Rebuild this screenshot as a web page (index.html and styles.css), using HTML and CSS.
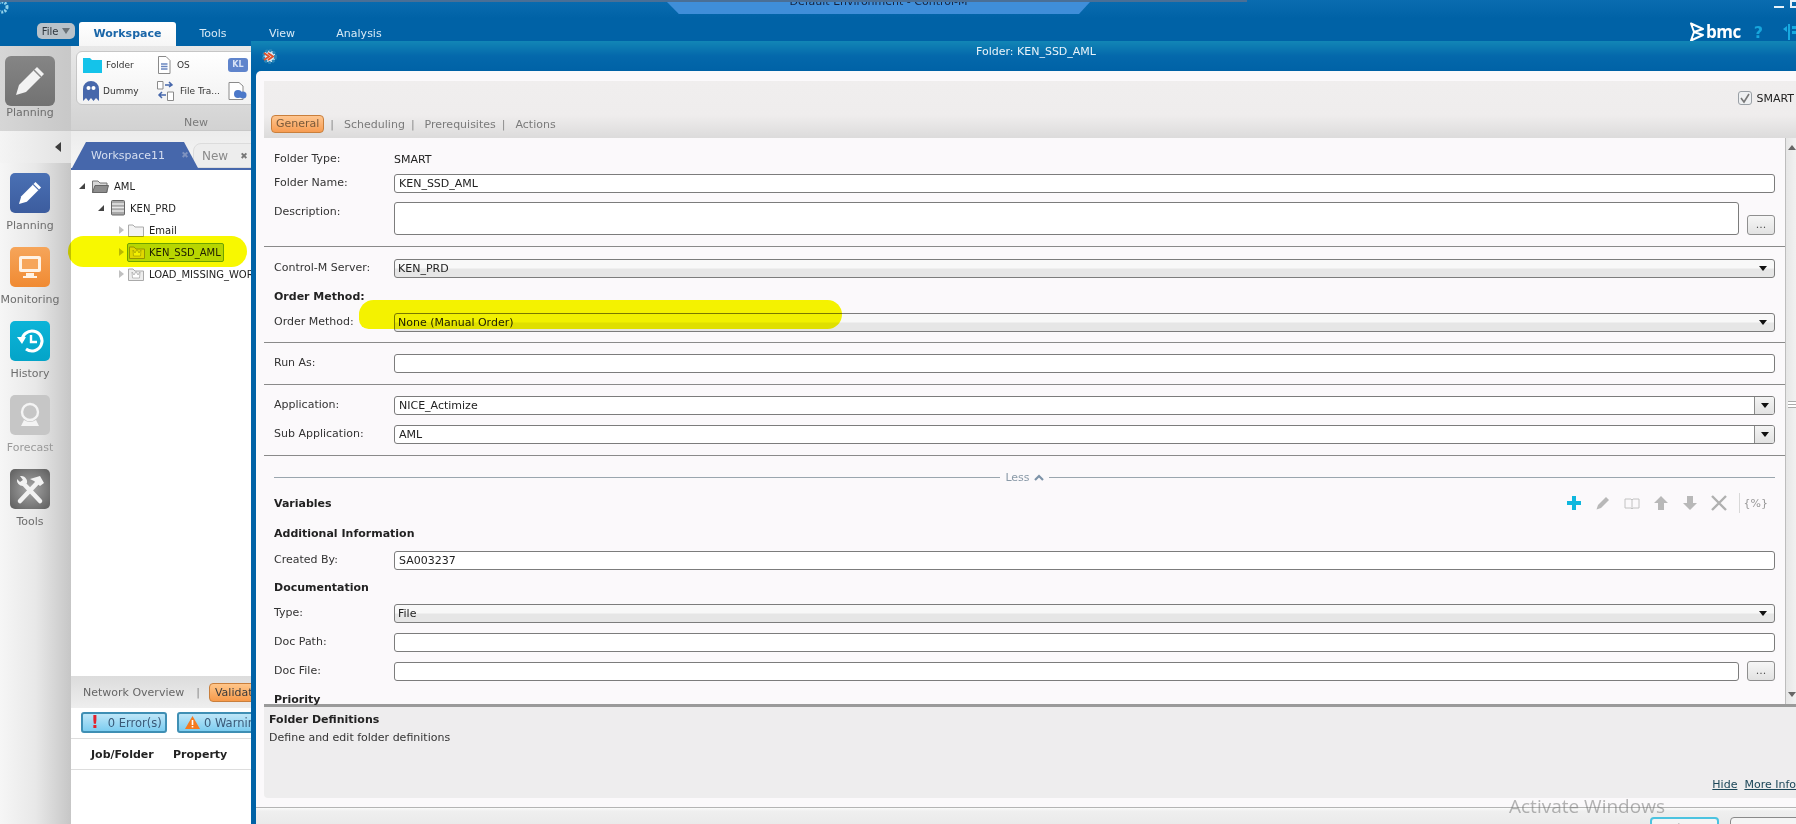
FILE: index.html
```html
<!DOCTYPE html>
<html lang="en">
<head>
<meta charset="utf-8">
<title>Default Environment - Control-M</title>
<link rel="stylesheet" href="styles.css">
</head>
<body>
<div class="app">
  <header class="topbar">
    <div class="title-tab"><span class="title-text">Default Environment - Control-M</span></div>
    <svg class="app-gear" width="16" height="16" viewBox="0 0 16 16"><circle cx="3" cy="8" r="5" fill="none" stroke="#8fd0ea" stroke-width="3" stroke-dasharray="2 1.2"/></svg>
    <div class="win-controls"><span class="win-min"></span><span class="win-max"></span></div>
    <button class="file-btn">File <span class="file-caret"></span></button>
    <nav class="ribbon-tabs">
      <span class="rtab rtab-on">Workspace</span>
      <span class="rtab rtab-tools">Tools</span>
      <span class="rtab rtab-view">View</span>
      <span class="rtab rtab-analysis">Analysis</span>
    </nav>
    <div class="brand">
      <svg width="16" height="20" viewBox="0 0 16 20"><path d="M2 1.5 L14 7 L5 10 L14 13 L2 18.5 L5 10 Z" fill="none" stroke="#fff" stroke-width="2" stroke-linejoin="round"/></svg>
      <span class="bmc">bmc</span>
      <span class="help">?</span>
      <svg class="flow" width="16" height="18" viewBox="0 0 16 18"><path d="M0 6 L4 3 V9 Z M5 1 H7 V17 H5 Z M9 3 H16 V6 H9 Z M9 8 H14 V11 H9 Z" fill="#18a9e0"/></svg>
    </div>
  </header>

  <div class="main">
    <aside class="sidebar">
      <div class="side-top">
        <div class="big-icon">
          <svg width="38" height="38" viewBox="0 0 38 38"><path d="M5 33 L8 23 L26 5 L33 12 L15 30 Z" fill="#f2f2f2"/><path d="M23 8 L30 15" stroke="#8a8a8a" stroke-width="1.5"/></svg>
        </div>
        <span class="side-label side-label-top">Planning</span>
      </div>
      <div class="collapse"><span class="collapse-arrow"></span></div>
      <div class="side-items">
        <div class="side-item">
          <div class="s-icon s-blue"><svg width="30" height="30" viewBox="0 0 38 38"><path d="M5 33 L8 23 L26 5 L33 12 L15 30 Z" fill="#fff"/><path d="M23 8 L30 15" stroke="#4667ab" stroke-width="1.5"/></svg></div>
          <span class="side-label">Planning</span>
        </div>
        <div class="side-item">
          <div class="s-icon s-orange"><svg width="30" height="30" viewBox="0 0 30 30"><rect x="4" y="4" width="22" height="16" rx="2" fill="#fff2e4"/><rect x="7" y="7" width="16" height="10" fill="#f6a55a"/><rect x="11" y="21" width="8" height="3" fill="#fff2e4"/><rect x="8" y="24" width="14" height="2" fill="#fff2e4"/></svg></div>
          <span class="side-label">Monitoring</span>
        </div>
        <div class="side-item">
          <div class="s-icon s-cyan"><svg width="30" height="30" viewBox="0 0 30 30"><path d="M7 15 A10 10 0 1 1 11 23" fill="none" stroke="#fff" stroke-width="3"/><path d="M2 11 L11 11 L7 18 Z" fill="#fff"/><path d="M16 9 V16 H22" fill="none" stroke="#fff" stroke-width="2.4"/></svg></div>
          <span class="side-label">History</span>
        </div>
        <div class="side-item side-off">
          <div class="s-icon s-grey"><svg width="30" height="30" viewBox="0 0 30 30"><circle cx="15" cy="12" r="8" fill="none" stroke="#f4f4f4" stroke-width="2.4"/><path d="M9 20 Q15 24 21 20 L24 26 H6 Z" fill="#f4f4f4"/></svg></div>
          <span class="side-label">Forecast</span>
        </div>
        <div class="side-item">
          <div class="s-icon s-dark"><svg width="32" height="32" viewBox="0 0 32 32"><path d="M6 28 L24 9" stroke="#f2f2f2" stroke-width="4.5" stroke-linecap="round"/><path d="M16 6 L26 3 L30 10 L26 13 L20 8 Z" fill="#f2f2f2"/><path d="M26 28 L9 10" stroke="#f2f2f2" stroke-width="4.5" stroke-linecap="round"/><path d="M3 6 L6 9 L9 7 L6 3 A6 6 0 0 1 13 10 L9 13 A6 6 0 0 1 3 6 Z" fill="#f2f2f2"/></svg></div>
          <span class="side-label">Tools</span>
        </div>
      </div>
    </aside>

    <section class="work">
      <div class="ribbon">
        <div class="ribbon-box">
          <div class="rb-item rb-folder">
            <svg width="19" height="15" viewBox="0 0 19 15"><path d="M0 0 H7 L9 2 H19 V15 H0 Z" fill="#14c3ea"/></svg><span>Folder</span>
          </div>
          <div class="rb-item rb-os">
            <svg width="14" height="18" viewBox="0 0 14 18"><path d="M1.5 .5 H9 L13 4.5 V17.5 H1.5 Z" fill="#fff" stroke="#8a8a8a"/><path d="M4 8 H10.5 M4 10.5 H10.5 M4 13 H10.5" stroke="#6a86c0" stroke-width="1.5"/></svg><span>OS</span>
          </div>
          <div class="rb-badge">KL</div>
          <div class="rb-item rb-folder">
            <svg width="16" height="20" viewBox="0 0 16 20"><path d="M0 20 V8 A8 8 0 0 1 16 8 V20 L13 17 L10.500 20 L8 17 L5.500 20 L3 17 Z" fill="#4667ab"/><circle cx="5.500" cy="7" r="2" fill="#fff"/><circle cx="10.500" cy="7" r="2" fill="#fff"/></svg><span>Dummy</span>
          </div>
          <div class="rb-item rb-os">
            <svg width="17" height="20" viewBox="0 0 17 20"><path d="M.5 .5 H6 V8 H.5 Z M10.500 11 H16.500 V19.500 H10.500 Z" fill="#fff" stroke="#8a8a8a"/><path d="M8 4 H15 M12 1 L15 4 L12 6 M9 14 H2 M5 11 L2 14 L5 17" fill="none" stroke="#4667ab" stroke-width="1.500"/></svg><span>File Tra...</span>
          </div>
          <div class="rb-cloud">
            <svg width="20" height="18" viewBox="0 0 20 18"><path d="M1 .5 H11 L15 4 V17.500 H1 Z" fill="#fff" stroke="#8a8a8a"/><circle cx="10" cy="12" r="4" fill="#4b78c9"/><circle cx="15" cy="13" r="3.500" fill="#4b78c9"/></svg>
          </div>
        </div>
        <div class="ribbon-group">New</div>
      </div>

      <div class="ws-tabs">
        <div class="ws-tab"><span>Workspace11</span><span class="ws-x">✖</span></div>
        <div class="ws-new"><span>New</span><span class="ws-x2">✖</span></div>
      </div>

      <div class="tree">
        <div class="hl-tree"></div>
        <div class="node n0"><span class="arr-open"></span>
          <svg width="17" height="13" viewBox="0 0 17 13"><path d="M.5 1 H6 L8 3 H15 V12.500 H.5 Z" fill="#d8d8d8" stroke="#777"/><path d="M.5 12.500 L3 5.500 H16.500 L14.500 12.500 Z" fill="#8d8d8d" stroke="#666"/></svg>
          <span class="lbl">AML</span></div>
        <div class="node n1"><span class="arr-open"></span>
          <svg width="14" height="16" viewBox="0 0 14 16"><rect x=".5" y=".5" width="13" height="14.500" rx="1" fill="#a9a9a9" stroke="#666"/><path d="M1 4 H13 M1 7.500 H13 M1 11 H13" stroke="#e8e8e8" stroke-width="1.300"/></svg>
          <span class="lbl">KEN_PRD</span></div>
        <div class="node n2"><span class="arr-closed"></span>
          <svg width="16" height="13" viewBox="0 0 16 13"><path d="M.5 1 H5 L7 3 H15.500 V12.500 H.5 Z" fill="#f3f3f3" stroke="#aaa"/></svg>
          <span class="lbl">Email</span></div>
        <div class="node n2 node-sel"><span class="arr-closed"></span>
          <span class="sel">
            <svg width="16" height="13" viewBox="0 0 16 13"><path d="M.5 1 H5 L7 3 H15.500 V12.500 H.5 Z" fill="#e8dd40" stroke="#9a9a20"/><path d="M4 4 L6 7 L8 3.500 L10 7 L12 4 L11.500 10 H4.500 Z" fill="#fbf7a8" stroke="#9a9a20" stroke-width=".6"/></svg>
            <span class="lbl">KEN_SSD_AML</span>
          </span></div>
        <div class="node n2"><span class="arr-closed"></span>
          <svg width="16" height="13" viewBox="0 0 16 13"><path d="M.5 1 H5 L7 3 H15.500 V12.500 H.5 Z" fill="#ededed" stroke="#aaa"/><path d="M4 4 L6 7 L8 3.500 L10 7 L12 4 L11.500 10 H4.500 Z" fill="#fff" stroke="#999" stroke-width=".6"/></svg>
          <span class="lbl nowrap">LOAD_MISSING_WORKFLOW</span></div>
      </div>

      <div class="val-tabs">
        <span class="val-net">Network Overview</span><span class="val-sep">|</span><span class="val-pill">Validation</span>
      </div>
      <div class="val-btns">
        <span class="val-btn val-err"><b class="bang">!</b>0 Error(s)</span>
        <span class="val-btn val-warn"><svg width="15" height="13" viewBox="0 0 15 13"><path d="M7.500 0 L15 13 H0 Z" fill="#f47b20"/><path d="M7.500 4 V9 M7.500 10 V11.500" stroke="#fff" stroke-width="1.600"/></svg>0 Warnings</span>
      </div>
      <div class="val-head"><span class="vh-job">Job/Folder</span><span>Property</span></div>
      <div class="val-rest"></div>
    </section>
  </div>

  <section class="dialog">
    <div class="dlg-title">
      <svg class="dlg-gear" width="17" height="17" viewBox="0 0 17 17"><circle cx="8.500" cy="8.500" r="6" fill="#dfeef6" stroke="#2a86b8" stroke-width="3" stroke-dasharray="2.600 1.300"/><path d="M3 5 L8 8.500 L3 12 M7 5 L12 8.500 L7 12" fill="none" stroke="#e2502a" stroke-width="1.800"/></svg>
      <span>Folder: KEN_SSD_AML</span>
    </div>
    <div class="dlg-body">
      <div class="dlg-head">
        <div class="smart"><span class="check"><svg width="12" height="12" viewBox="0 0 12 12"><path d="M2 6 L5 10 L10 2" fill="none" stroke="#777" stroke-width="1.600"/></svg></span><span>SMART</span></div>
        <div class="dlg-tabs">
          <span class="dt dt-on">General</span><i class="dt-sep">|</i>
          <span class="dt">Scheduling</span><i class="dt-sep">|</i>
          <span class="dt">Prerequisites</span><i class="dt-sep">|</i>
          <span class="dt">Actions</span>
        </div>
      </div>

      <div class="form-wrap">
        <div class="form">
          <div class="hl-order"></div>
          <div class="sec sec1">
            <div class="row"><label>Folder Type:</label><span class="val">SMART</span></div>
            <div class="row g4"><label>Folder Name:</label><div class="inp">KEN_SSD_AML</div></div>
            <div class="row row-desc g9"><label>Description:</label><div class="inp inp-tall"></div><button class="dots dots-end">...</button></div>
          </div>
          <div class="sec sec2">
            <div class="row"><label>Control-M Server:</label><div class="sel-box">KEN_PRD<span class="caret"></span></div></div>
            <div class="row g9"><h4>Order Method:</h4></div>
            <div class="row g6"><label>Order Method:</label><div class="sel-box">None (Manual Order)<span class="caret"></span></div></div>
          </div>
          <div class="sec sec3">
            <div class="row"><label>Run As:</label><div class="inp"></div></div>
          </div>
          <div class="sec sec4">
            <div class="row"><label>Application:</label><div class="inp inp-combo">NICE_Actimize<span class="combo-btn"><span class="caret-in"></span></span></div></div>
            <div class="row g9"><label>Sub Application:</label><div class="inp inp-combo">AML<span class="combo-btn"><span class="caret-in"></span></span></div></div>
          </div>
          <div class="sec5">
            <div class="less"><span class="less-line"></span><span class="less-text">Less <svg width="10" height="7" viewBox="0 0 10 7"><path d="M1 6 L5 2 L9 6" fill="none" stroke="#7d93a8" stroke-width="2.200"/></svg></span><span class="less-line"></span></div>
            <div class="row g6 vars"><h4>Variables</h4>
              <div class="var-tools">
                <svg width="16" height="16" viewBox="0 0 16 16"><path d="M6 1 H10 V6 H15 V10 H10 V15 H6 V10 H1 V6 H6 Z" fill="#0fb7de"/></svg>
                <svg width="16" height="16" viewBox="0 0 16 16"><path d="M1.500 14.500 L3 10 L11 2 L14 5 L6 13 Z" fill="#b8b8b8"/></svg>
                <svg width="16" height="14" viewBox="0 0 16 14"><path d="M1 3 H7 L8 4 L9 3 H15 V12 H9 L8 13 L7 12 H1 Z M8 4 V13" fill="none" stroke="#c2c2c2"/></svg>
                <svg width="16" height="16" viewBox="0 0 16 16"><path d="M8 1 L15 8 H11 V15 H5 V8 H1 Z" fill="#b8b8b8"/></svg>
                <svg width="16" height="16" viewBox="0 0 16 16"><path d="M8 15 L15 8 H11 V1 H5 V8 H1 Z" fill="#b8b8b8"/></svg>
                <svg width="16" height="16" viewBox="0 0 16 16"><path d="M1 1 L15 15 M15 1 L1 15" stroke="#b0b0b0" stroke-width="2.400"/></svg>
                <span class="var-sep"></span>
                <span class="var-pct">{%}</span>
              </div>
            </div>
            <div class="row g11"><h4>Additional Information</h4></div>
            <div class="row g7"><label>Created By:</label><div class="inp">SA003237</div></div>
            <div class="row g8"><h4>Documentation</h4></div>
            <div class="row g6"><label>Type:</label><div class="sel-box">File<span class="caret"></span></div></div>
            <div class="row g9"><label>Doc Path:</label><div class="inp"></div></div>
            <div class="row g9"><label>Doc File:</label><div class="inp"></div><button class="dots">...</button></div>
            <div class="row g9"><h4>Priority</h4></div>
          </div>
        </div>
        <div class="scrollbar">
          <span class="sb-up"></span>
          <span class="sb-grip"></span>
          <span class="sb-down"></span>
        </div>
      </div>

      <div class="info">
        <h5>Folder Definitions</h5>
        <p>Define and edit folder definitions</p>
        <div class="info-links"><a>Hide</a><a>More Info</a></div>
      </div>

      <div class="dlg-foot">
        <button class="foot-btn foot-primary">Load</button>
        <button class="foot-btn">Cancel</button>
      </div>
    </div>
  </section>

  <div class="watermark"><span class="wm1">Activate Windows</span><span class="wm2">Go to Settings to activate Windows.</span></div>
</div>
</body>
</html>
```

FILE: styles.css
```css
* { box-sizing: border-box; }
html, body { margin: 0; height: 100%; overflow: hidden; }
body { font-family: "DejaVu Sans", sans-serif; font-size: 11px; color: #2b2b2b; }
button { font-family: inherit; }
svg { display: block; flex: none; }

.app { position: relative; width: 1796px; height: 824px; overflow: hidden; display: flex; flex-direction: column; background: #fff; }

/* top bar */
.topbar { position: relative; height: 46px; flex: none; display: flex; align-items: flex-end; background: linear-gradient(#0a6cb0, #0062a6 40%); }
.topbar::before { content: ""; position: absolute; left: 0; top: 0; width: 1247px; height: 2px; background: #4a6f96; z-index: 1; }
.title-tab { position: absolute; left: 667px; top: 2px; width: 423px; height: 12px; background: #3f8ed9; clip-path: polygon(0 0, 100% 0, 97.400% 100%, 2.800% 100%); text-align: center; overflow: hidden; }
.title-text { display: block; margin-top: -7px; line-height: 14px; font-size: 11px; color: #15243f; }
.app-gear { position: absolute; left: -1px; top: -1px; }
.win-controls { position: absolute; right: -4px; top: 0; display: flex; align-items: flex-end; gap: 6px; }
.win-min { width: 10px; height: 2px; background: #e7f2fa; margin-top: 6px; }
.win-max { width: 10px; height: 8px; border: 2px solid #e7f2fa; }
.file-btn { margin: 0 4px 7px 37px; width: 38px; height: 16px; padding: 0; border: 0; border-radius: 5px; background: #b9c2c9; color: #30383f; font-size: 10px; display: flex; align-items: center; justify-content: center; gap: 4px; }
.file-caret { width: 0; height: 0; border-left: 4px solid transparent; border-right: 4px solid transparent; border-top: 6px solid #6a7278; }
.ribbon-tabs { display: flex; align-items: flex-end; height: 24px; }
.rtab { height: 24px; line-height: 23px; color: #d8eaf6; font-size: 11px; text-align: center; }
.rtab-on { width: 97px; background: linear-gradient(#fff, #f6f6f6); border-radius: 3px 3px 0 0; color: #1a66a8; font-weight: bold; }
.rtab-tools { width: 74px; }
.rtab-view { width: 64px; }
.rtab-analysis { width: 90px; }
.brand { margin-left: auto; height: 22px; margin-bottom: 3px; display: flex; align-items: center; }
.bmc { margin-left: 1px; font-family: "Open Sans", sans-serif; font-weight: 700; font-size: 17px; letter-spacing: -.5px; color: #fff; line-height: 20px; }
.help { margin-left: 13px; font-size: 16px; font-weight: bold; color: #17a6dc; margin-right: 5px; }
.flow { margin-left: 15px; margin-right: -3px; }

/* main */
.main { flex: 1; display: flex; min-height: 0; }
.sidebar { width: 71px; flex: none; display: flex; flex-direction: column; background: linear-gradient(90deg, #f6f6f6, #e8e8e8 50%, #c6c6c6); }
.side-top { height: 85px; display: flex; flex-direction: column; align-items: center; padding: 10px 11px 0 0; background: linear-gradient(90deg, #d6d6d6, #c8c8c8); }
.big-icon { width: 50px; height: 50px; border-radius: 6px; background: linear-gradient(#858585, #727272); display: flex; align-items: center; justify-content: center; }
.side-label { line-height: 18px; color: #6d6d6d; margin-top: 4px; }
.side-label-top { margin-top: -2px; }
.collapse { height: 32px; display: flex; align-items: center; justify-content: flex-end; padding-right: 10px; background: linear-gradient(90deg, #f4f4f4, #e2e2e2); }
.collapse-arrow { width: 0; height: 0; border-top: 5px solid transparent; border-bottom: 5px solid transparent; border-right: 6px solid #3d3d3d; }
.side-items { padding: 10px 11px 0 0; }
.side-item { height: 74px; display: flex; flex-direction: column; align-items: center; }
.side-off .side-label { color: #9a9a9a; }
.s-icon { width: 40px; height: 40px; border-radius: 5px; display: flex; align-items: center; justify-content: center; }
.s-blue { background: linear-gradient(#4a70b4, #3c5c9e); }
.s-orange { background: linear-gradient(#f6a55a, #f08a32); }
.s-cyan { background: linear-gradient(#0cb4d8, #04a4c8); }
.s-grey { background: #c6c6c6; }
.s-dark { background: radial-gradient(circle, #a8a8a8, #5c5c5c); }

/* workspace */
.work { flex: 1; min-width: 0; display: flex; flex-direction: column; }
.ribbon { height: 85px; flex: none; padding: 5px 0 0 5px; background: linear-gradient(#e8e8e8, #d2d2d2); border-bottom: 1px solid #c8c8c8; }
.ribbon-box { width: 220px; height: 54px; background: linear-gradient(#fff, #f2f2f2); border: 1px solid #c6c6c6; border-radius: 6px; display: grid; grid-template-columns: 74px 71px 60px; grid-template-rows: 26px 26px; align-items: center; padding-left: 6px; }
.rb-item { display: flex; align-items: center; gap: 4px; color: #333; font-size: 9px; white-space: nowrap; }
.rb-os { gap: 6px; }
.rb-badge { width: 20px; height: 14px; border-radius: 3px; background: #5f84cc; color: #d9e3f6; font-size: 8px; font-weight: bold; text-align: center; line-height: 14px; }
.ribbon-group { width: 240px; text-align: center; line-height: 18px; margin-top: 9px; color: #7a7a7a; }
.ws-tabs { height: 39px; flex: none; display: flex; align-items: flex-end; padding: 0 0 0 1px; background: linear-gradient(#ececec, #f6f6f6); border-bottom: 2px solid #4667ab; }
.ws-tab { width: 126px; height: 26px; display: flex; align-items: center; padding-left: 19px; background: #4667ab; color: #d6dff0; font-size: 11px; clip-path: polygon(14px 0, 112px 0, 100% 100%, 0 100%); }
.ws-x { margin-left: 16px; font-size: 9px; color: #7e92bf; }
.ws-new { width: 70px; height: 25px; margin-left: -5px; border-radius: 8px 8px 0 0; background: #ededed; border: 1px solid #dcdcdc; display: flex; align-items: center; padding-left: 8px; color: #8a8a8a; font-size: 12px; }
.ws-x2 { margin-left: 12px; font-size: 9px; color: #777; }

.tree { position: relative; flex: 1; padding-top: 5px; background: #fff; font-size: 10px; }
.hl-tree { position: absolute; left: -3px; top: 66px; width: 179px; height: 31px; border-radius: 16px; background: #f8f800; mix-blend-mode: multiply; z-index: 2; }
.node { height: 22px; display: flex; align-items: center; }
.n0 { padding-left: 8px; }
.n1 { padding-left: 27px; }
.n2 { padding-left: 48px; }
.arr-open { width: 0; height: 0; border-left: 6px solid transparent; border-bottom: 6px solid #444; margin-right: 7px; }
.arr-closed { width: 0; height: 0; border-top: 4px solid transparent; border-bottom: 4px solid transparent; border-left: 5px solid #c0c0c0; margin-right: 4px; }
.lbl { margin-left: 5px; color: #222; }
.nowrap { white-space: nowrap; }
.sel { display: flex; align-items: center; width: 97px; height: 19px; margin-left: -1px; padding-left: 1px; border: 1px solid #6fa800; border-radius: 2px; background: #bddc70; }
.sel .lbl { margin-left: 4px; }

.val-tabs { height: 32px; flex: none; display: flex; align-items: center; padding-left: 12px; background: linear-gradient(#dcdcdc, #eeeeee); white-space: nowrap; }
.val-net { color: #666; font-size: 11px; }
.val-sep { margin: 0 9px 0 12px; color: #888; }
.val-pill { height: 19px; line-height: 17px; padding: 0 5px; border: 1px solid #c97f3c; border-radius: 4px; background: linear-gradient(#ffc68a, #f79a4a); color: #3a3a3a; }
.val-btns { height: 31px; flex: none; display: flex; gap: 10px; align-items: flex-start; padding: 4px 0 0 10px; border-bottom: 1px solid #ddd; white-space: nowrap; }
.val-btn { height: 21px; width: 86px; display: flex; align-items: center; border: 2px solid #3f8fb4; border-radius: 3px; background: linear-gradient(#bfe6f8, #7ccdf0); color: #3a5a78; font-size: 11.500px; flex: none; padding-left: 8px; }
.val-warn { width: 120px; padding-left: 6px; gap: 4px; }
.bang { color: #e3232d; font-size: 17px; font-weight: bold; margin-right: 9px; line-height: 17px; }
.val-head { height: 31px; flex: none; display: flex; align-items: center; padding-left: 20px; font-weight: bold; color: #222; border-bottom: 1px solid #ddd; }
.vh-job { width: 82px; }
.val-rest { flex: none; height: 54px; }

/* dialog window */
.dialog { position: absolute; left: 251px; top: 41px; width: 1545px; height: 783px; z-index: 3; padding-left: 5px; background: #0062a6; display: flex; flex-direction: column; }
.dlg-title { height: 30px; flex: none; margin-left: -5px; position: relative; display: flex; justify-content: center; padding-top: 3px; color: #eaf3fa; font-size: 11px; line-height: 16px; background: linear-gradient(#1286b6, #0468ab 50%, #0062a6); }
.dlg-gear { position: absolute; left: 10px; top: 7px; }
.dlg-title span { margin-left: 25px; }
.dlg-body { flex: 1; min-height: 0; display: flex; flex-direction: column; background: #fbf9fb; border-radius: 5px 0 0 0; padding-top: 10px; }
.dlg-head { height: 57px; flex: none; margin-left: 8px; padding-top: 8px; background: linear-gradient(#f0eeee, #efeded 60%, #dcdbdb); }
.smart { display: flex; justify-content: flex-end; align-items: center; gap: 4px; height: 18px; margin-right: 2px; color: #222; }
.check { width: 14px; height: 14px; border: 1px solid #9aa0a6; border-radius: 3px; background: #eef0f2; display: flex; align-items: center; justify-content: center; }
.dlg-tabs { display: flex; align-items: center; height: 18px; margin-top: 8px; padding-left: 7px; color: #7a7a7a; }
.dt-sep { font-style: normal; margin: 0 10px 0 6px; color: #8a8a8a; }
.dt-on { height: 18px; line-height: 16px; padding: 0 4px; border: 1px solid #c97f3c; border-radius: 4px; background: linear-gradient(#ffc690, #f79c52); color: #7a5a3a; }

.form-wrap { height: 566px; flex: none; margin-left: 8px; display: flex; }
.form { position: relative; flex: 1; min-width: 0; }
.sec { padding: 11px 10px 11px 10px; border-bottom: 1px solid #8a8a8a; }
.sec2 { padding-bottom: 10px; }
.sec3, .sec4 { padding-top: 10px; }
.sec5 { padding: 12px 10px 0 10px; }
.row { display: flex; align-items: center; min-height: 19px; }
.row-desc { align-items: flex-start; }
.g4 { margin-top: 4px; }
.g6 { margin-top: 6px; }
.g7 { margin-top: 7px; }
.g8 { margin-top: 8px; }
.g9 { margin-top: 9px; }
.g11 { margin-top: 11px; }
label { width: 120px; flex: none; color: #333; line-height: 20px; }
.val { color: #222; }
h4 { margin: 0; font-size: 11px; font-weight: bold; color: #222; line-height: 19px; }
.inp { flex: 1; height: 19px; padding: 0 4px; line-height: 18px; background: #fff; border: 1px solid #7c7c7c; border-radius: 3px; color: #222; position: relative; }
.inp-tall { height: 33px; }
.inp-combo { padding-right: 20px; }
.combo-btn { position: absolute; right: 0; top: 0; width: 20px; height: 17px; border-left: 1px solid #8a8a8a; background: linear-gradient(#f4f4f4, #e2e2e2); border-radius: 0 2px 2px 0; display: flex; align-items: center; justify-content: center; }
.caret-in { width: 0; height: 0; border-left: 4px solid transparent; border-right: 4px solid transparent; border-top: 5px solid #111; }
.sel-box { flex: 1; height: 19px; position: relative; padding: 0 3px; line-height: 18px; border: 1px solid #7c7c7c; border-radius: 3px; background: linear-gradient(#f8f8f8 48%, #e6e6e6 52%); color: #222; }
.caret { position: absolute; right: 7px; top: 6px; width: 0; height: 0; border-left: 4px solid transparent; border-right: 4px solid transparent; border-top: 5px solid #111; }
.dots { width: 28px; height: 20px; margin-left: 8px; flex: none; border: 1px solid #8f8f8f; border-radius: 3px; background: linear-gradient(#f6f6f6, #e2e2e2); color: #555; font-size: 11px; line-height: 16px; padding: 0; }
.dots-end { align-self: flex-end; }
.hl-order { position: absolute; left: 95px; top: 162px; width: 483px; height: 29px; border-radius: 15px 15px 15px 10px; background: #f8f800; mix-blend-mode: multiply; z-index: 2; }
.less { display: flex; align-items: center; height: 19px; }
.less-line { flex: 1; height: 1px; background: #9aa6ae; }
.less-text { width: 49px; display: flex; align-items: center; justify-content: center; gap: 4px; color: #8a9aa8; font-size: 11px; }
.vars { justify-content: space-between; }
.var-tools { display: flex; align-items: center; gap: 13px; margin-right: 7px; }
.var-sep { width: 1px; height: 20px; background: #d8d8d8; margin: 0 -1px; }
.var-pct { font-size: 11px; color: #999; margin-left: -8px; }
.scrollbar { width: 11px; flex: none; position: relative; background: linear-gradient(90deg, #e6e6e6, #f1f1f1); border-left: 1px solid #bdbdbd; }
.sb-up { position: absolute; left: 2px; top: 7px; width: 0; height: 0; border-left: 4px solid transparent; border-right: 4px solid transparent; border-bottom: 5px solid #666; }
.sb-down { position: absolute; left: 2px; bottom: 7px; width: 0; height: 0; border-left: 4px solid transparent; border-right: 4px solid transparent; border-top: 5px solid #666; }
.sb-grip { position: absolute; left: 2px; top: 263px; width: 8px; height: 7px; border-top: 1px solid #aaa; border-bottom: 1px solid #aaa; background: linear-gradient(#fff 40%, #aaa 40%, #aaa 60%, #fff 60%); }

.info { height: 94px; flex: none; margin-left: 8px; padding: 4px 0 4px 5px; display: flex; flex-direction: column; border-top: 3px solid #9a9a9a; background: #eeedee; border-radius: 0 0 0 4px; }
.info h5 { margin: 0; font-size: 11px; line-height: 18px; font-weight: bold; color: #222; }
.info p { margin: 0; line-height: 18px; color: #333; }
.info-links { margin-top: auto; display: flex; justify-content: flex-end; gap: 7px; line-height: 18px; }
.info-links a { color: #1b4658; text-decoration: underline; white-space: nowrap; }
.dlg-foot { flex: 1; margin-top: 9px; border-top: 1px solid #b4b4b4; display: flex; justify-content: flex-end; gap: 11px; padding-top: 9px; background: linear-gradient(#fbfbfb, #efefef 20%, #eaeaea); overflow: hidden; }
.foot-btn { width: 70px; height: 25px; margin-right: -4px; flex: none; border: 1px solid #8a8a8a; border-radius: 4px; background: #f4f4f4; font-size: 11px; color: #444; }
.foot-primary { width: 69px; margin-right: 0; border: 2px solid #4cc3e0; }

.watermark { position: absolute; left: 1509px; top: 793px; z-index: 4; display: flex; flex-direction: column; white-space: nowrap; font-family: "Open Sans", sans-serif; color: rgba(110, 110, 110, .5); }
.wm1 { font-size: 19px; line-height: 26px; }
.wm2 { font-size: 12px; line-height: 14px; margin-top: 3px; }
```
